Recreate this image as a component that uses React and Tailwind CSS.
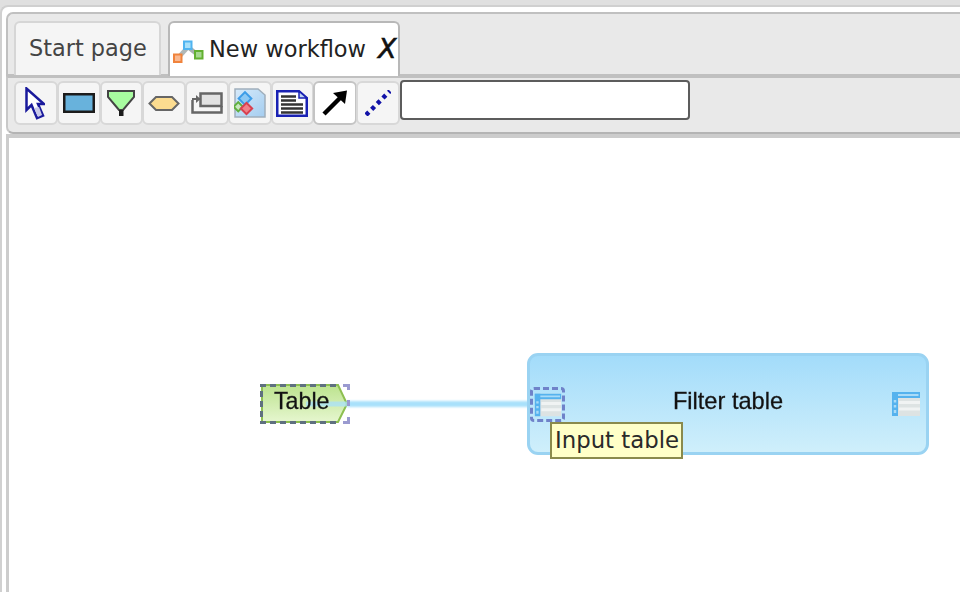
function Btn({ active, children }) {
  return (
    <div className={`w-[43.75px] h-[44px] -mr-px shrink-0 rounded-[6px] border-2 flex items-center justify-center ${active ? "bg-white border-[#c4c4c4]" : "bg-[#f5f5f5] border-[#d8d8d8]"}`}>
      {children}
    </div>
  );
}

function TableIcon() {
  return (
    <svg width="28" height="24" viewBox="0 0 28 24" className="block">
      <rect x="0" y="0" width="28" height="24" fill="#dde3e3" />
      <path d="M7 10.500H28M7 17H28" stroke="#f0f3f3" strokeWidth="3" />
      <rect x="0" y="0" width="28" height="6" fill="#55b2ee" />
      <rect x="0" y="0" width="6" height="24" fill="#55b2ee" />
      <path d="M3 8v2.500M3 13v2.500M3 18v3" stroke="#a9dbf8" strokeWidth="2.500" />
      <path d="M6 3H26.500" stroke="#a9dbf8" strokeWidth="2" />
    </svg>
  );
}

export default function App() {
  return (
    <div className="w-[960px] h-[592px] overflow-hidden bg-[#e0e0e0] pt-[5px] font-['DejaVu_Sans',sans-serif]">
      <div className="h-[587px] bg-white rounded-tl-[8px] border-l-2 border-t-2 border-[#d0d0d0] pl-[4px] pt-[5px] flex flex-col">
        <div className="h-[64px] shrink-0 bg-[#e9e9e9] rounded-tl-[7px] border-l-2 border-t-2 border-b-2 border-[#c0c0c0] flex items-end pl-[6px] gap-[7px]">
          <div className="w-[147px] h-[54px] -mb-px shrink-0 rounded-t-[6px] border-2 border-b-0 border-[#d6d6d6] bg-[#f5f5f5] flex items-center pl-[13px] text-[22.4px] text-[#444] whitespace-nowrap">
            Start page
          </div>
          <div className="w-[232px] h-[55px] -mb-[2px] shrink-0 rounded-t-[6px] border-2 border-b-0 border-[#b8b8b8] bg-white flex items-center pl-[3px] text-[22.5px] text-[#222] whitespace-nowrap relative z-10">
            <svg width="31" height="24" viewBox="0 0 31 24" className="shrink-0 mt-[4px] blur-[0.3px]">
              <path d="M5 18L15 7" stroke="#b0b8b8" strokeWidth="4.500" fill="none" />
              <path d="M15 7L25 15" stroke="#a8b0b0" strokeWidth="4.500" fill="none" />
              <rect x="1" y="14.500" width="7.500" height="7.500" fill="#f9b890" stroke="#f0833c" strokeWidth="2" />
              <rect x="11" y="1.500" width="7.500" height="7.500" fill="#a8e0fa" stroke="#50b4f0" strokeWidth="2" />
              <rect x="22" y="11" width="7.500" height="7.500" fill="#a6d890" stroke="#62b030" strokeWidth="2" />
            </svg>
            <span className="ml-[5px]">New workflow</span>
            <span className="ml-[12px] text-[27px] italic leading-none mt-[-2px] text-[#111] [-webkit-text-stroke:0.6px_#111]">X</span>
          </div>
        </div>
        <div className="h-[58px] shrink-0 bg-[#e9e9e9] rounded-bl-[7px] border-l-2 border-t-2 border-b-2 border-t-[#c0c0c0] border-l-[#c8c8c8] border-b-[#b4b4b4] flex items-start pl-[6px] pt-[3px]">
          <Btn>
            <svg width="20" height="33" viewBox="0 0 20 33" className="blur-[0.3px] -ml-px">
              <path d="M1.500 1.500V23L6.500 18L12 31L18 28.500L13 17H19Z" fill="#fff" stroke="#1a1a9c" strokeWidth="2.5" strokeLinejoin="miter" />
              <path d="M9 21L13 30L17 28L14 20Z" fill="#c8c8e8" />
            </svg>
          </Btn>
          <Btn>
            <svg width="32" height="20" viewBox="0 0 32 20" className="blur-[0.3px]">
              <rect x="1.250" y="1.250" width="29.500" height="17.500" fill="#68b2dc" stroke="#1c1c1c" strokeWidth="2.5" />
            </svg>
          </Btn>
          <Btn>
            <svg width="28" height="26" viewBox="0 0 28 26" className="blur-[0.3px]">
              <path d="M1 1H27V7L16 20H12L1 7Z" fill="#a8fca0" stroke="#444" strokeWidth="2" />
              <rect x="12" y="20" width="4.500" height="6" fill="#1c1c1c" />
            </svg>
          </Btn>
          <Btn>
            <svg width="32" height="15" viewBox="0 0 32 15" className="blur-[0.3px]">
              <path d="M1.500 7.500L8 1H24L30.500 7.500L24 14H8Z" fill="#fcdc90" stroke="#666" strokeWidth="2" />
            </svg>
          </Btn>
          <Btn>
            <svg width="32" height="22" viewBox="0 0 32 22" className="blur-[0.3px]">
              <path d="M1.500 8V20.500H30.500V14" fill="none" stroke="#666" strokeWidth="2.5" />
              <rect x="9.500" y="1.500" width="21" height="12.500" fill="#e2e2e2" stroke="#666" strokeWidth="2.5" />
              <path d="M1 7H9" stroke="#666" strokeWidth="2" />
              <path d="M5 3L9.500 7L5 11Z" fill="#666" />
            </svg>
          </Btn>
          <Btn>
            <svg width="32" height="30" viewBox="0 0 32 30" className="blur-[0.5px]">
              <defs>
                <linearGradient id="doc" x1="0" y1="0" x2="1" y2="1">
                  <stop offset="0" stopColor="#d6eafa" />
                  <stop offset="1" stopColor="#a4cdf0" />
                </linearGradient>
              </defs>
              <path d="M1 1H24L31 7V29H1Z" fill="url(#doc)" stroke="#a0afbc" strokeWidth="1.5" />
              <rect x="6.500" y="6" width="9" height="9" transform="rotate(45 11 10.500)" fill="#8cc8f4" stroke="#3c9ce8" strokeWidth="2" />
              <rect x="1" y="15.500" width="6.500" height="6.500" transform="rotate(45 4.250 18.750)" fill="#c8e8c0" stroke="#60b040" strokeWidth="2" />
              <rect x="8.500" y="16.500" width="8" height="8" transform="rotate(45 12.500 20.500)" fill="#f08088" stroke="#d84050" strokeWidth="2" />
            </svg>
          </Btn>
          <Btn>
            <svg width="32" height="27" viewBox="0 0 32 27" className="blur-[0.3px]">
              <path d="M1.250 1.250H23L30.750 8V25.750H1.250Z" fill="#fff" stroke="#1a22b4" strokeWidth="2.5" />
              <path d="M23 1.250V8H30.750Z" fill="#c0d4f4" stroke="#1a22b4" strokeWidth="1.5" />
              <path d="M5 6.500H20M5 10.500H20M5 14.500H27M5 18.500H27M5 22.500H27" stroke="#333" strokeWidth="2.5" />
            </svg>
          </Btn>
          <Btn active>
            <svg width="26" height="26" viewBox="0 0 26 26" className="blur-[0.3px]">
              <path d="M2 24L18 8" stroke="#000" strokeWidth="4.5" />
              <path d="M11 3L25 0.500L23 14Z" fill="#000" />
            </svg>
          </Btn>
          <Btn>
            <svg width="26" height="26" viewBox="0 0 26 26" className="blur-[0.3px]">
              <path d="M1 25L25 1" stroke="#1212a8" strokeWidth="4.500" strokeDasharray="4 4" />
            </svg>
          </Btn>
          <div className="w-[290px] h-[40px] ml-[1px] -mt-[1px] shrink-0 bg-white rounded-[4px] border-2 border-[#5c5c5c]" />
        </div>
        <div className="flex-1 border-l-[3px] border-t-[4px] border-[#cccccc] bg-white relative">
          <div className="absolute left-[338px] top-[263px] w-[184px] h-[6px] bg-[#a9e1fb] blur-[0.8px]" />
          <div className="absolute left-[251px] top-[246px] w-[90px] h-[40px] blur-[0.4px]">
            <svg width="90" height="40" viewBox="0 0 90 40" className="absolute inset-0">
              <defs>
                <linearGradient id="g" x1="0" y1="0" x2="0" y2="1">
                  <stop offset="0" stopColor="#bce38e" />
                  <stop offset="1" stopColor="#e6f6cf" />
                </linearGradient>
              </defs>
              <path d="M2 1H78L87 20L78 38H2Z" fill="url(#g)" stroke="#8dbf50" strokeWidth="2" />
              <path d="M46 20H87" stroke="#a9e1fb" strokeWidth="5" opacity="0.75" />
              <path d="M83 1.500H88.500V6M88.500 16V22M88.500 33V38.500H83" fill="none" stroke="#9a9ad0" strokeWidth="3" />
              <path d="M76 1.500H1.500V38.500H76" fill="none" stroke="#5f7080" strokeWidth="3" strokeDasharray="6 4" />
            </svg>
            <div className="absolute left-[14px] top-[0px] text-[23.2px] text-[#111] font-['Liberation_Sans',sans-serif] [-webkit-text-stroke:0.3px_#222]">Table</div>
          </div>
          <div className="absolute left-[518px] top-[215px] w-[402px] h-[102px] rounded-[11px] border-[3px] border-[#9ad3f2] bg-gradient-to-b from-[#a3dcfa] to-[#cfeffb] flex items-center justify-center blur-[0.4px]">
            <span className="text-[23.6px] text-[#111] font-['Liberation_Sans',sans-serif] mb-[5px] [-webkit-text-stroke:0.3px_#222]">Filter table</span>
            <div className="absolute right-[6px] top-[36px]"><TableIcon /></div>
            <div className="absolute left-[0px] top-[31px] w-[35px] h-[35px] border-[3px] border-dashed border-[#6f82c9] rounded-[4px] flex items-center justify-center">
              <div className="scale-[0.96]"><TableIcon /></div>
            </div>
          </div>
          <div className="absolute left-[541px] top-[284px] w-[133px] h-[37px] pl-[3px] flex items-center border-[2px] border-[#8a8a4c] bg-[#ffffc8] text-[22.8px] text-[#2a2a2a] whitespace-nowrap">
            Input table
          </div>
        </div>
      </div>
    </div>
  );
}
